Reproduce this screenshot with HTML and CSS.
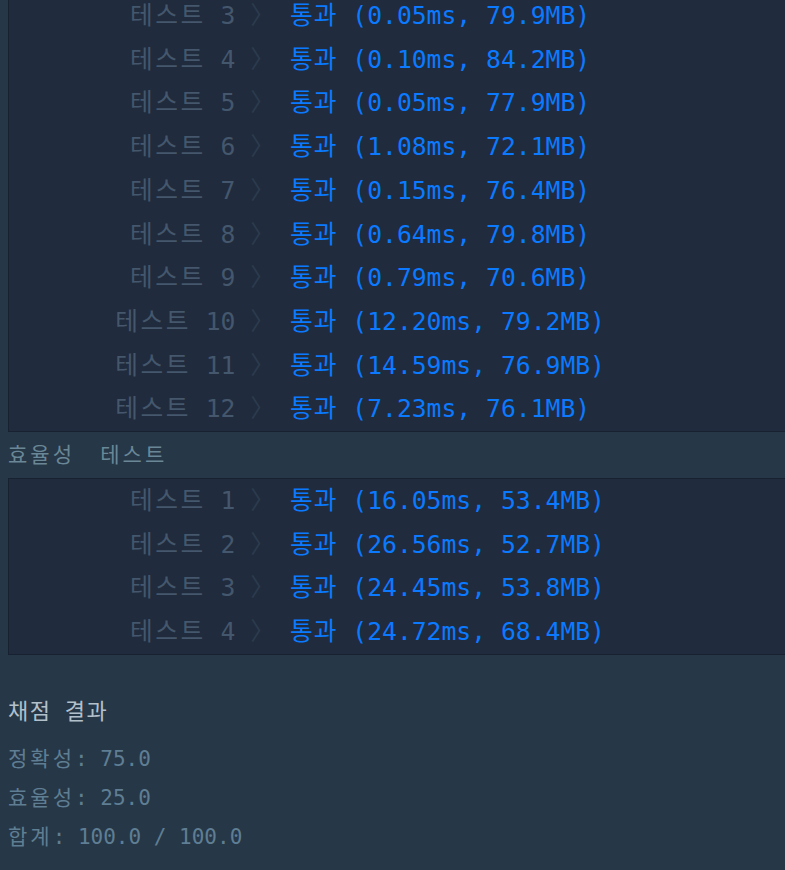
FILE: index.html
```html
<!DOCTYPE html>
<html lang="ko">
<head>
    <meta charset="UTF-8">
    <title>채점 결과</title>
    <link rel="stylesheet" href="styles.css">
</head>
<body>

    <table class="test-table first">
        <tr><td class="label"><span class="ko">테스트</span> 3 <span class="arrow">〉</span></td><td class="result"><span class="ko">통과</span> (0.05ms, 79.9MB)</td></tr>
        <tr><td class="label"><span class="ko">테스트</span> 4 <span class="arrow">〉</span></td><td class="result"><span class="ko">통과</span> (0.10ms, 84.2MB)</td></tr>
        <tr><td class="label"><span class="ko">테스트</span> 5 <span class="arrow">〉</span></td><td class="result"><span class="ko">통과</span> (0.05ms, 77.9MB)</td></tr>
        <tr><td class="label"><span class="ko">테스트</span> 6 <span class="arrow">〉</span></td><td class="result"><span class="ko">통과</span> (1.08ms, 72.1MB)</td></tr>
        <tr><td class="label"><span class="ko">테스트</span> 7 <span class="arrow">〉</span></td><td class="result"><span class="ko">통과</span> (0.15ms, 76.4MB)</td></tr>
        <tr><td class="label"><span class="ko">테스트</span> 8 <span class="arrow">〉</span></td><td class="result"><span class="ko">통과</span> (0.64ms, 79.8MB)</td></tr>
        <tr><td class="label"><span class="ko">테스트</span> 9 <span class="arrow">〉</span></td><td class="result"><span class="ko">통과</span> (0.79ms, 70.6MB)</td></tr>
        <tr><td class="label"><span class="ko">테스트</span> 10 <span class="arrow">〉</span></td><td class="result"><span class="ko">통과</span> (12.20ms, 79.2MB)</td></tr>
        <tr><td class="label"><span class="ko">테스트</span> 11 <span class="arrow">〉</span></td><td class="result"><span class="ko">통과</span> (14.59ms, 76.9MB)</td></tr>
        <tr><td class="label"><span class="ko">테스트</span> 12 <span class="arrow">〉</span></td><td class="result"><span class="ko">통과</span> (7.23ms, 76.1MB)</td></tr>
    </table>

    <p class="section-title"><span class="ko">효율성</span>  <span class="ko">테스트</span></p>

    <table class="test-table">
        <tr><td class="label"><span class="ko">테스트</span> 1 <span class="arrow">〉</span></td><td class="result"><span class="ko">통과</span> (16.05ms, 53.4MB)</td></tr>
        <tr><td class="label"><span class="ko">테스트</span> 2 <span class="arrow">〉</span></td><td class="result"><span class="ko">통과</span> (26.56ms, 52.7MB)</td></tr>
        <tr><td class="label"><span class="ko">테스트</span> 3 <span class="arrow">〉</span></td><td class="result"><span class="ko">통과</span> (24.45ms, 53.8MB)</td></tr>
        <tr><td class="label"><span class="ko">테스트</span> 4 <span class="arrow">〉</span></td><td class="result"><span class="ko">통과</span> (24.72ms, 68.4MB)</td></tr>
    </table>

    <h4 class="result-title"><span class="ko">채점</span> <span class="ko">결과</span></h4>
    <div class="scores">
        <p><span class="ko">정확성</span>: 75.0</p>
        <p><span class="ko">효율성</span>: 25.0</p>
        <p><span class="ko">합계</span>: 100.0 / 100.0</p>
    </div>

</body>
</html>
```

FILE: styles.css
```css
html, body {
    overflow: hidden;
}
body {
    margin: 0;
    padding: 0 0 0 8px;
    background: #263747;
    font-family: "DejaVu Sans Mono", "Noto Sans CJK KR", monospace;
    height: 870px;
}
.ko {
    letter-spacing: 3px;
}
.test-table {
    border-collapse: collapse;
    background: #202b3d;
    border: 1px solid #172130;
    width: 800px;
    font-size: 24.7px;
}
.test-table.first {
    margin-top: -7px;
}
.test-table td {
    padding: 0;
    height: 43.7px;
    line-height: 43.7px;
    white-space: pre;
}
.label {
    width: 266px;
    text-align: right;
    color: #44576c;
}
.label .ko {
    letter-spacing: 2.5px;
}
.arrow {
    color: #2c3b4e;
}
.result {
    padding-left: 15px !important;
    color: #0b7aff;
}
.result .ko {
    letter-spacing: 1px;
}
.section-title {
    margin: 0;
    height: 46px;
    line-height: 46px;
    font-size: 21px;
    color: #6a8797;
    white-space: pre;
}
.result-title {
    margin: 0;
    padding-top: 40px;
    line-height: 34px;
    font-size: 22px;
    font-weight: normal;
    color: #b2c0cc;
}
.result-title .ko {
    letter-spacing: 1.5px;
}
.scores {
    margin-top: 11px;
}
.scores p {
    margin: 0;
    line-height: 39px;
    font-size: 21px;
    color: #5f7e93;
}
```
